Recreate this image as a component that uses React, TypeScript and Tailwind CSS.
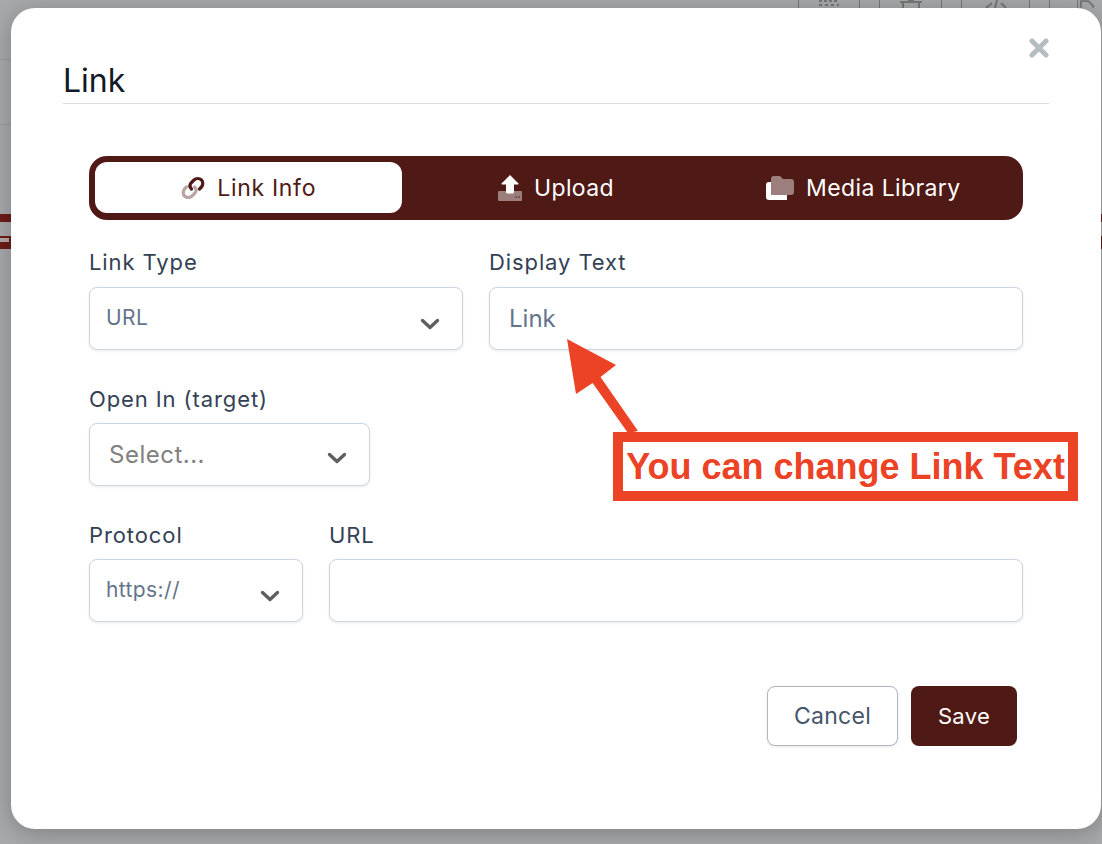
const font = "font-['Inter','Noto_Sans',sans-serif]";

const Chevron = ({ className = "" }: { className?: string }) => (
  <svg width="20" height="12" viewBox="0 0 20 12" className={className}>
    <path d="M2.5 2.5 10 9.5l7.5-7" fill="none" stroke="#5f5f5f" strokeWidth="3.4" strokeLinecap="round" strokeLinejoin="round" />
  </svg>
);

const LinkIcon = () => (
  <svg width="24" height="24" viewBox="0 0 24 24">
    <g fill="none" strokeWidth="3.2" strokeLinecap="round">
      <path d="M13.500 11C15.500 13 15.500 15.500 13.500 17.500L11 20C9 22 5.500 22 3.500 20C1.500 18 2 14.500 4 12.500L5.500 11" stroke="#b9a5a3" />
      <path d="M10.500 13C8.500 11 8.500 8.500 10.500 6.500L13 4C15 2 18.500 2 20.500 4C22.500 6 22 9.500 20 11.500L18.500 13" stroke="#4f1a16" />
    </g>
  </svg>
);

const UploadIcon = () => (
  <svg width="24" height="26" viewBox="0 0 24 26">
    <path d="M1 16h22a1 1 0 0 1 1 1v8a1 1 0 0 1-1 1H1a1 1 0 0 1-1-1v-8a1 1 0 0 1 1-1z" fill="#9c7e7c" />
    <circle cx="18" cy="22" r="0.8" fill="#4f1a16" />
    <circle cx="21" cy="22" r="0.8" fill="#4f1a16" />
    <path d="M12 0 20.500 8.500a.6.6 0 0 1-.4 1H16v7.500a1.500 1.500 0 0 1-1.500 1.500h-5A1.500 1.500 0 0 1 8 17V9.500H3.900a.6.600 0 0 1-.4-1z" fill="#fff" />
  </svg>
);

const FolderIcon = () => (
  <svg width="28" height="24" viewBox="0 0 28 24">
    <path d="M0 9a3 3 0 0 1 3-3h2v13h16v5H3a3 3 0 0 1-3-3z" fill="#fff" />
    <path d="M5 3a3 3 0 0 1 3-3h6l3 3h8a3 3 0 0 1 3 3v10a3 3 0 0 1-3 3H5z" fill="#9c7e7c" />
  </svg>
);

const Label = ({ children }: { children: string }) => (
  <label className="mb-[10px] block h-[28px] text-[22px] leading-[28px] tracking-[0.9px] text-[#334155]">{children}</label>
);

const boxClass =
  "flex h-[63px] items-center justify-between rounded-[8px] border border-[#cbd5e1] bg-white shadow-[0_1px_3px_rgba(15,23,42,0.08)]";

const tabClass = "flex items-center justify-center gap-[12px] text-[23px] tracking-[0.4px]";

const App = () => {
  return (
    <div className={`relative h-[844px] w-[1102px] overflow-hidden bg-[#a8a9aa] ${font}`}>
      {/* page behind the overlay */}
      <div className="flex h-[8px] justify-end pr-[7px]">
        <div className="flex h-full w-[62px] items-end justify-center border-x border-[#777]">
          <svg width="24" height="8" viewBox="0 0 24 8">
            <path d="M2 1h20M2 5h3M8 5h3M14 5h3M20 5h2" stroke="#777" strokeWidth="2" strokeDasharray="3 2" />
          </svg>
        </div>
        <div className="ml-[19px] flex h-full w-[63px] items-end justify-center border-x border-[#777]">
          <svg width="24" height="8" viewBox="0 0 24 8">
            <path d="M1 2h22M4 2v6M20 2v6M9 0h6" stroke="#777" strokeWidth="2" fill="none" />
          </svg>
        </div>
        <div className="ml-[19px] flex h-full w-[69px] items-end justify-center border-x border-[#777]">
          <svg width="24" height="8" viewBox="0 0 24 8">
            <path d="M2 8l6-5M13 0l-2 8M17 3l5 5" stroke="#777" strokeWidth="2" fill="none" />
          </svg>
        </div>
        <div className="ml-[19px] h-full w-px bg-[#777]" />
        <div className="ml-[27px] flex h-full w-[18px] items-end border-l border-[#777]">
          <svg width="18" height="8" viewBox="0 0 18 8">
            <path d="M3 8V1h8l5 5v2" stroke="#777" strokeWidth="2" fill="none" />
          </svg>
        </div>
      </div>
      <div className="absolute left-0 top-[59px] h-px w-full bg-[#9a9b9c]" />
      <div className="absolute left-0 top-[124px] h-px w-full bg-[#9a9b9c]" />
      <div className="absolute left-0 top-[214px] h-[8px] w-full bg-[#6e1c1a]" />
      <div className="absolute left-0 top-[236px] h-[13px] w-full bg-[#6e1c1a]" />
      <div className="absolute left-0 top-[238px] h-[4px] w-[9px] bg-[#b3a9a8]" />

      {/* modal */}
      <div className="absolute left-[11px] top-[8px] h-[821px] w-[1090px] rounded-[24px] bg-white shadow-[0_4px_24px_rgba(0,0,0,0.25)]">
        <svg width="20" height="20" viewBox="0 0 20 20" className="absolute left-[1018px] top-[30px]">
          <path d="M3 3l14 14M17 3 3 17" stroke="#b5bdc1" strokeWidth="5" strokeLinecap="round" />
        </svg>

        <div className="mx-[52px] h-[96px] border-b border-[#dcdcdc] pt-[55px]">
          <h2 className="text-[32px] leading-[36px] text-[#111827]">Link</h2>
        </div>

        <div className="ml-[78px] w-[934px]">
          <div className="mt-[52px] grid h-[64px] grid-cols-3 rounded-[18px] bg-[#4f1a16] p-[6px] pb-[7px]">
            <div className={`${tabClass} rounded-[12px] bg-white text-[#4f1a16]`}>
              <LinkIcon />
              <span className="pt-px tracking-[0.7px]">Link Info</span>
            </div>
            <div className={`${tabClass} text-white`}>
              <UploadIcon />
              <span className="pt-px">Upload</span>
            </div>
            <div className={`${tabClass} text-white`}>
              <FolderIcon />
              <span className="pt-px">Media Library</span>
            </div>
          </div>

          <div className="mt-[28px] flex gap-[26px]">
            <div className="flex w-[374px] flex-col">
              <Label>Link Type</Label>
              <div className={`${boxClass} mt-px pl-[16px] pr-[22px]`}>
                <span className="-mt-[2px] text-[21px] tracking-[0.4px] text-[#64748b]">URL</span>
                <Chevron className="mt-[10px]" />
              </div>
            </div>
            <div className="flex w-[534px] flex-col">
              <Label>Display Text</Label>
              <div className={`${boxClass} mt-px px-[19px]`}>
                <span className="text-[24px] text-[#64748b]">Link</span>
              </div>
            </div>
          </div>

          <div className="mt-[35px] w-[281px]">
            <Label>Open In (target)</Label>
            <div className={`${boxClass} pl-[19px] pr-[22px]`}>
              <span className="text-[24px] tracking-[0.5px] text-[#808080]">Select...</span>
              <Chevron className="mt-[6px]" />
            </div>
          </div>

          <div className="mt-[35px] flex gap-[26px]">
            <div className="w-[214px]">
              <Label>Protocol</Label>
              <div className={`${boxClass} pl-[16px] pr-[22px]`}>
                <span className="-mt-[2px] text-[21px] tracking-[0.4px] text-[#64748b]">https://</span>
                <Chevron className="mt-[10px]" />
              </div>
            </div>
            <div className="w-[694px]">
              <Label>URL</Label>
              <div className={boxClass} />
            </div>
          </div>

          <div className="mr-[6px] mt-[64px] flex justify-end gap-[13px]">
            <button className="h-[60px] w-[131px] rounded-[8px] border border-[#b0b4c0] bg-white pt-px text-[23px] tracking-[0.3px] text-[#475569] shadow-[0_1px_3px_rgba(15,23,42,0.1)]">
              Cancel
            </button>
            <button className="h-[60px] w-[106px] rounded-[8px] bg-[#4f1a16] text-[22px] tracking-[0.3px] text-white">
              Save
            </button>
          </div>
        </div>
      </div>

      {/* annotation over the modal */}
      <svg width="90" height="100" viewBox="0 0 90 100" className="absolute left-[560px] top-[335px]">
        <path d="M7 4 56 30 40.500 42 78 96 68 98 32.600 48 16 59z" fill="#ec4226" />
      </svg>
      <div className="absolute left-[613px] top-[432px] flex h-[69px] w-[465px] items-center justify-center border-[10px] border-[#ec4226] bg-white font-['Liberation_Sans',sans-serif] text-[36px] font-bold whitespace-nowrap text-[#ec4226]">
        You can change Link Text
      </div>
    </div>
  );
};

export default App;
